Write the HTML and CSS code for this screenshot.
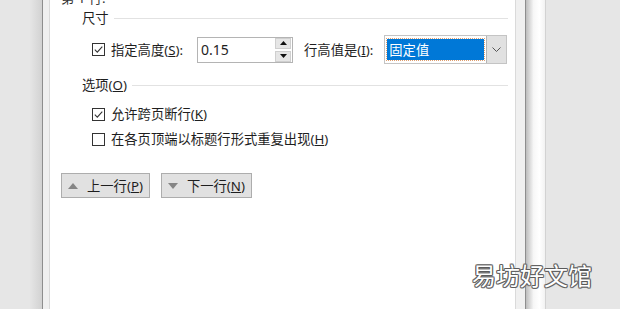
FILE: index.html
```html
<!DOCTYPE html>
<html>
<head>
<meta charset="utf-8">
<title>表格属性 - 行</title>
<link rel="stylesheet" href="styles.css">
</head>
<body>
<div class="screen">
  <div class="desk-left"></div>

  <div class="dialog">
    <div class="pane">
      <div class="tab-title">第 1 行:</div>

      <div class="group">
        <div class="group-head"><span>尺寸</span><i class="rule"></i></div>
        <div class="size-row">
          <label class="check">
            <svg class="box" width="13" height="13" viewBox="0 0 13 13"><rect x="0.5" y="0.5" width="12" height="12" fill="#fff" stroke="#333"/><path d="M2.8 6.6 L5.3 9.1 L10.3 3.6" fill="none" stroke="#333" stroke-width="1.1"/></svg>
            <span>指定高度(<u>S</u>):</span>
          </label>
          <div class="spin">
            <span class="spin-value">0.15</span>
            <div class="spin-btns">
              <span class="spin-btn"><svg width="7" height="4" viewBox="0 0 7 4"><path d="M0 4 L3.5 0 L7 4 Z" fill="#111"/></svg></span>
              <span class="spin-btn"><svg width="7" height="4" viewBox="0 0 7 4"><path d="M0 0 L3.5 4 L7 0 Z" fill="#111"/></svg></span>
            </div>
          </div>
          <span class="field-label">行高值是(<u>I</u>):</span>
          <div class="combo">
            <span class="combo-value"><span class="combo-sel">固定值</span></span>
            <span class="combo-btn"><svg width="9" height="5" viewBox="0 0 9 5"><path d="M0.5 0.5 L4.5 4.5 L8.5 0.5" fill="none" stroke="#555"/></svg></span>
          </div>
        </div>
      </div>

      <div class="group options">
        <div class="group-head"><span>选项(<u>O</u>)</span><i class="rule"></i></div>
        <label class="check opt">
          <svg class="box" width="13" height="13" viewBox="0 0 13 13"><rect x="0.5" y="0.5" width="12" height="12" fill="#fff" stroke="#333"/><path d="M2.8 6.6 L5.3 9.1 L10.3 3.6" fill="none" stroke="#333" stroke-width="1.1"/></svg>
          <span>允许跨页断行(<u>K</u>)</span>
        </label>
        <label class="check opt second">
          <svg class="box" width="13" height="13" viewBox="0 0 13 13"><rect x="0.5" y="0.5" width="12" height="12" fill="#fff" stroke="#333"/></svg>
          <span>在各页顶端以标题行形式重复出现(<u>H</u>)</span>
        </label>
      </div>

      <div class="nav-buttons">
        <button class="nav-btn"><svg width="10" height="6" viewBox="0 0 10 6"><path d="M0 6 L5 0 L10 6 Z" fill="#858585"/></svg><span>上一行(<u>P</u>)</span></button>
        <button class="nav-btn"><svg width="10" height="6" viewBox="0 0 10 6"><path d="M0 0 L5 6 L10 0 Z" fill="#858585"/></svg><span>下一行(<u>N</u>)</span></button>
      </div>
    </div>
  </div>

  <div class="shade"></div>
  <div class="desk-right"></div>

  <div class="watermark">易坊好文馆</div>
</div>
</body>
</html>
```

FILE: styles.css
```css
body {
  margin: 0;
  font-family: "Noto Sans", "Noto Sans CJK SC", sans-serif;
  font-size: 13.3px;
  color: #1e1e1e;
  background: #e6e6e6;
  overflow: hidden;
  white-space: nowrap;
}

.screen {
  position: relative;
  display: flex;
  height: 309px;
  width: 620px;
  overflow: hidden;
}

.desk-left {
  width: 42px;
  flex: none;
  background: linear-gradient(to right, #e6e6e6 70%, #d2d2d2);
}

/* window frame round the white pane */
.dialog {
  flex: none;
  border-left: 1px solid #8e8e8e;
  border-right: 1px solid #8e8e8e;
  background: #f0f0f0;
  padding: 0 9px 0 6px;
  box-sizing: border-box;
  width: 484px;
}

.pane {
  display: flow-root;
  height: 100%;
  background: #fff;
  border-left: 1px solid #dadada;
  border-right: 1px solid #dadada;
  padding: 0 7px 0 11px;
}

.shade {
  width: 19px;
  flex: none;
  border-right: 1px solid #d2d2d2;
  background: linear-gradient(to right, #bdbdbd, #f7f7f7 40%, #fff 70%, #f2f2f2);
}

.desk-right {
  flex: 1;
  background: #e6e6e6;
}

.tab-title {
  line-height: 18px;
  margin-top: -11px;
  color: #333;
}

.group {
  margin-left: 21px;
}

.group-head {
  display: flex;
  align-items: center;
  line-height: 18px;
  margin-top: 2px;
}

.rule {
  flex: 1;
  height: 1px;
  background: #e2e2e2;
  margin-left: 5px;
}

.check {
  display: flex;
  align-items: center;
  line-height: 18px;
}

.check .box {
  margin-right: 6px;
  flex: none;
}

.size-row {
  display: flex;
  align-items: center;
  height: 29px;
  margin-top: 8px;
  padding-left: 10px;
}

.size-row > * {
  flex: none;
}

.spin {
  display: flex;
  align-items: center;
  width: 96px;
  height: 26px;
  box-sizing: border-box;
  border: 1px solid #b4b4b4;
  margin-left: 14px;
  padding: 0 0 0 3px;
}

.spin-value {
  flex: 1;
  font-size: 14px;
}

.spin-btns {
  display: flex;
  flex-direction: column;
  gap: 2px;
  margin-right: 1px;
}

.spin-btn {
  display: flex;
  align-items: center;
  justify-content: center;
  width: 14px;
  height: 9px;
  background: #e6e6e6;
  border: 1px solid #cfcfcf;
}

.field-label {
  margin-left: 11px;
}

.combo {
  display: flex;
  width: 123px;
  height: 29px;
  box-sizing: border-box;
  border: 1px solid #c4c4c4;
  margin-left: 11px;
}

.combo-value {
  flex: 1;
  padding: 3px 2px;
  display: flex;
}

.combo-sel {
  flex: 1;
  display: flex;
  align-items: center;
  background: #0078d7;
  color: #fff;
  padding-left: 2px;
  outline: 1px dotted #e0a070;
}

.combo-btn {
  width: 19px;
  display: flex;
  align-items: center;
  justify-content: center;
  background: #e1e1e1;
  border-left: 1px solid #b4b4b4;
}

.options .group-head {
  margin-top: 12px;
}

.opt {
  margin-left: 10px;
  margin-top: 11px;
}

.opt.second {
  margin-top: 7px;
}

.nav-buttons {
  display: flex;
  gap: 11px;
  margin-top: 25px;
}

.nav-btn {
  display: flex;
  align-items: center;
  height: 25px;
  border: 1px solid #adadad;
  background: #e1e1e1;
  font: inherit;
  color: #1e1e1e;
  padding: 0 6px;
  gap: 9px;
}

/* outlined watermark, white fill with a grey edge */
.watermark {
  position: absolute;
  left: 472px;
  top: 260px;
  font-size: 24px;
  line-height: 30px;
  color: #fff;
  font-family: "Noto Sans CJK SC", sans-serif;
  text-shadow: 1px 0 #5a5a5a, -1px 0 #5a5a5a, 0 1px #5a5a5a, 0 -1px #5a5a5a,
    1px 1px #8a8a8a, -1px -1px #8a8a8a, 1px -1px #8a8a8a, -1px 1px #8a8a8a;
}
```
